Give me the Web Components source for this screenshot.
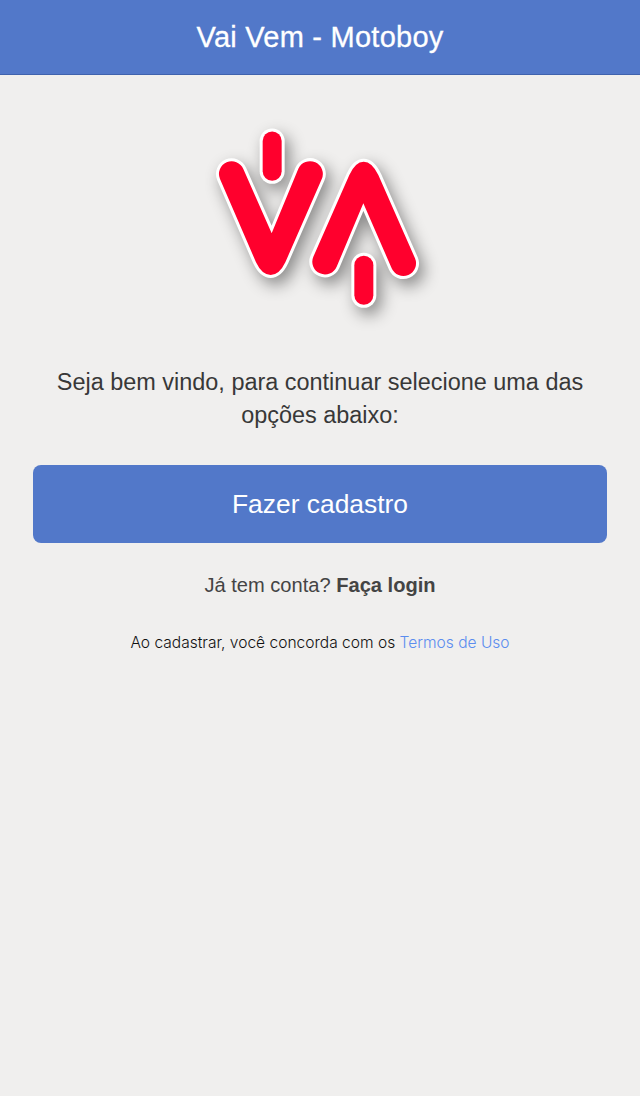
<!DOCTYPE html>
<html lang="pt"><head><meta charset="utf-8"><title>Vai Vem - Motoboy</title>
<style>html,body{margin:0;height:100%;background:#f0efee;font-family:"Liberation Sans",Arial,sans-serif}</style></head>
<body>
<app-screen>
  <app-bar slot="bar">Vai Vem - Motoboy</app-bar>
  <app-logo></app-logo>
  <welcome-text>Seja bem vindo, para continuar selecione uma das opções abaixo:</welcome-text>
  <primary-button>Fazer cadastro</primary-button>
  <login-hint>Já tem conta? <b>Faça login</b></login-hint>
  <terms-note>Ao cadastrar, você concorda com os <a>Termos de Uso</a></terms-note>
</app-screen>
<script>
function def(name, css, html){
  customElements.define(name, class extends HTMLElement{
    constructor(){super();const r=this.attachShadow({mode:"open"});r.innerHTML=`<style>${css}</style>${html||"<slot></slot>"}`;}
  });
}
def("app-screen",`:host{display:flex;flex-direction:column;height:1096px;background:#f0efee;overflow:hidden;box-sizing:border-box}
.body{display:flex;flex-direction:column;padding:0 33px}`,`<slot name="bar"></slot><div class="body"><slot></slot></div>`);
def("app-bar",`:host{display:block;height:74px;line-height:75px;background:#5278c9;border-bottom:1px solid #3f62ad;color:#fff;text-align:center;font-size:29px;letter-spacing:.25px;-webkit-text-stroke:.3px #fff;flex:none}`);
def("app-logo",`:host{display:block;height:220px;margin:40px 0 0 0;flex:none}
svg{display:block;width:240px;height:220px;margin:0 auto;filter:blur(.7px) drop-shadow(5px 7px 8px rgba(0,0,0,.42))}
.s{fill:#ff002d;stroke:#fff;stroke-width:18;stroke-linejoin:round;paint-order:stroke}
.t{fill:none;stroke-linecap:round}.o{stroke:#fff;stroke-width:75}.r{stroke:#ff002d;stroke-width:57}`,`<svg viewBox="0 0 720 660" aria-hidden="true">
<path class="s" d="M60 192L168 442Q186 480 212 480Q238 480 256 442L365 193A38 38 0 1 0 295 161L215 355L130 162A38 38 0 1 0 60 192Z"/>
<path class="s" d="M340 425L448 180Q466 140 491 140Q516 140 535 180L645 430A38 38 0 1 1 575 460L490 265L410 455A38 38 0 1 1 340 425Z"/>
<path class="t o" d="M216.500 78V169"/><path class="t r" d="M216.500 78V169"/>
<path class="t o" d="M491.500 451V541"/><path class="t r" d="M491.500 451V541"/>
</svg>`);
def("welcome-text",`:host{display:block;margin:31px -10px 0;font-size:23.45px;line-height:33px;color:#383838;text-align:center;flex:none}`);
def("primary-button",`:host{display:block;margin-top:33px;height:78px;line-height:78px;background:#5278c9;border-radius:8px;color:#fff;text-align:center;font-size:26.4px;flex:none}`);
def("login-hint",`:host{display:block;margin-top:28px;font-size:20.1px;line-height:28px;color:#444;text-align:center;flex:none}`);
def("terms-note",`:host{display:block;margin-top:32px;font-family:Inter,"Liberation Sans",sans-serif;font-weight:300;font-size:15.55px;line-height:24px;color:#111;text-align:center;flex:none}
::slotted(a){color:#5b8def}`);
</script>
</body></html>
